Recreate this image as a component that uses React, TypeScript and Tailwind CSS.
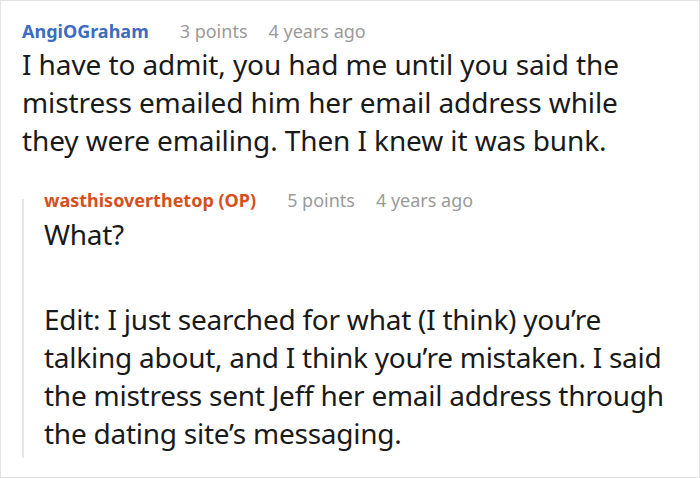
export default function App() {
  return (
    <div className="w-[700px] h-[478px] bg-white border border-[#e3e3e3] overflow-hidden" style={{ fontFamily: '"Noto Sans", sans-serif' }}>
      <div className="pl-[21px] pt-[16px]">
        {/* Parent comment */}
        <div className="flex items-baseline text-[18px] leading-[28px]">
          <span className="font-bold text-[#3c6cbf]">AngiOGraham</span>
          <span className="ml-[31px] text-[#9a9a9a]">3 points</span>
          <span className="ml-[21px] text-[#9a9a9a]">4 years ago</span>
        </div>
        <p className="text-[28px] leading-[38px] text-[#1a1a1a] pr-[40px] tracking-[-0.1px]">
          I have to admit, you had me until you said the mistress emailed him her email address while they were emailing. Then I knew it was bunk.
        </p>

        {/* Reply */}
        <div className="mt-[27px] flex">
          <div className="w-[2px] mt-[13px] mb-[2px] bg-[#e6e6e6] shrink-0" />
          <div className="pl-[20px] pb-[8px]">
            <div className="flex items-baseline text-[18px] leading-[28px]">
              <span className="font-bold text-[#d4501e]">wasthisoverthetop (OP)</span>
              <span className="ml-[31px] text-[#9a9a9a]">5 points</span>
              <span className="ml-[21px] text-[#9a9a9a]">4 years ago</span>
            </div>
            <p className="mt-[1px] text-[28px] leading-[38px] text-[#1a1a1a] tracking-[-0.3px]">What?</p>
            <p className="mt-[47px] text-[28px] leading-[38px] text-[#1a1a1a] pr-[20px] tracking-[-0.25px]">
              Edit: I just searched for what (I think) you’re talking about, and I think you’re mistaken. I said the mistress sent Jeff her email address through the dating site’s messaging.
            </p>
          </div>
        </div>
      </div>
    </div>
  );
}
